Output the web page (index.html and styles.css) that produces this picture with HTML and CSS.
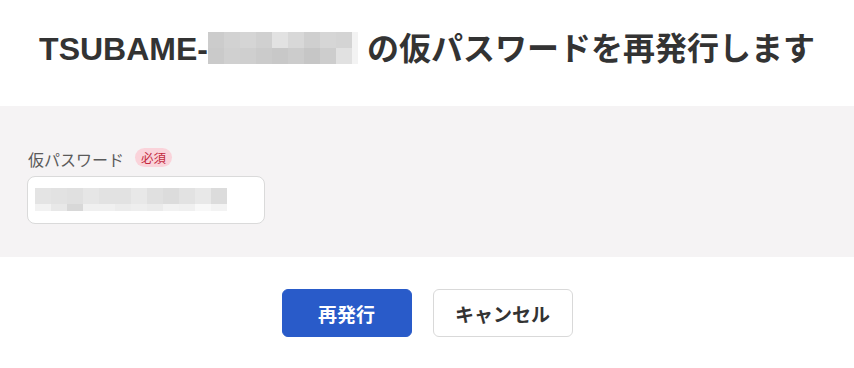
FILE: index.html
```html
<!DOCTYPE html>
<html lang="ja">
<head>
<meta charset="utf-8">
<title>仮パスワード再発行</title>
<link rel="stylesheet" href="styles.css">
</head>
<body>
<header class="head">
  <h1 class="title">TSUBAME-<span class="mosaic-wrap"><span class="mosaic-title"><i class="g1"></i><i class="g2"></i><i class="g3"></i><i class="g4"></i><i class="g5"></i><i class="g6"></i><i class="g7"></i><i class="g8"></i><i class="g9"></i><i class="g10"></i><i class="h1"></i><i class="h2"></i><i class="h3"></i><i class="h4"></i><i class="h5"></i><i class="h6"></i><i class="h7"></i><i class="h8"></i><i class="h9"></i><i class="g10"></i></span></span> の仮パスワードを再発行します</h1>
</header>
<section class="form-area">
  <div class="label-row">
    <span class="label">仮パスワード</span>
    <span class="badge">必須</span>
  </div>
  <div class="input">
    <div class="mosaic-input">
      <i class="a1"></i><i class="a2"></i><i class="a3"></i><i class="a4"></i><i class="a5"></i><i class="a6"></i><i class="a7"></i><i class="a8"></i><i class="a9"></i><i class="a10"></i><i class="a11"></i><i class="a12"></i>
      <i class="b1"></i><i class="b2"></i><i class="b3"></i><i class="b4"></i><i class="b5"></i><i class="b6"></i><i class="b7"></i><i class="b8"></i><i class="b9"></i><i class="b10"></i><i class="b11"></i><i class="b12"></i>
    </div>
  </div>
</section>
<div class="actions">
  <button class="btn btn-primary">再発行</button>
  <button class="btn btn-secondary">キャンセル</button>
</div>
</body>
</html>
```

FILE: styles.css
```css
html, body {
  margin: 0;
  padding: 0;
  background: #ffffff;
}
body {
  font-family: "Liberation Sans", "Noto Sans CJK JP", sans-serif;
  color: #333333;
}
.head {
  padding: 25px 0 33px;
}
.title {
  margin: 0;
  font-size: 32px;
  line-height: 48px;
  height: 48px;
  font-weight: 700;
  text-align: center;
  color: #333333;
  white-space: nowrap;
}
.mosaic-wrap {
  display: inline-block;
  width: 150px;
  height: 32px;
  overflow: hidden;
  vertical-align: -4px;
  line-height: 0;
}
.mosaic-title {
  display: grid;
  grid-template-columns: repeat(9, 16px) 6px;
  grid-template-rows: 16px 16px;
  width: 150px;
  height: 32px;
}
.mosaic-title i { display: block; }
.g1 { background: #cccccc; }
.g2 { background: #d2d2d2; }
.g3 { background: #d5d5d5; }
.g4 { background: #d0d0d0; }
.g5 { background: #e2e2e2; }
.g6 { background: #d8d8d8; }
.g7 { background: #cfcfcf; }
.g8 { background: #d6d6d6; }
.g9 { background: #d4d4d4; }
.g10 { background: #f3f3f3; }
.h1 { background: #cacaca; }
.h2 { background: #d0d0d0; }
.h3 { background: #cfcfcf; }
.h4 { background: #cbcbcb; }
.h5 { background: #c8c8c8; }
.h6 { background: #cccccc; }
.h7 { background: #c6c6c6; }
.h8 { background: #cdcdcd; }
.h9 { background: #e1e1e1; }

.form-area {
  background: #f5f3f4;
  padding: 41px 27px 33px;
}
.label-row {
  display: flex;
  align-items: center;
  height: 24px;
  padding-left: 1px;
  font-family: "Noto Sans CJK JP", sans-serif;
}
.label {
  font-size: 16px;
  line-height: 24px;
  color: #5a5a5a;
}
.badge {
  margin-left: 11px;
  height: 19px;
  line-height: 19px;
  padding: 0 6px;
  border-radius: 10px;
  background: #fad3da;
  color: #c32a3e;
  font-size: 12.5px;
  margin-top: -3px;
}
.input {
  margin-top: 5px;
  width: 238px;
  height: 48px;
  box-sizing: border-box;
  background: #ffffff;
  border: 1px solid #dadada;
  border-radius: 8px;
  padding: 11px 0 0 7px;
}
.mosaic-input {
  display: grid;
  grid-template-columns: repeat(12, 16px);
  grid-template-rows: 16px 7px;
}
.mosaic-input i { display: block; }
.a1 { background: #e4e4e4; }
.a2 { background: #e2e2e2; }
.a3 { background: #e0e0e0; }
.a4 { background: #e6e6e6; }
.a5 { background: #e2e2e2; }
.a6 { background: #e2e2e2; }
.a7 { background: #e8e8e8; }
.a8 { background: #e0e0e0; }
.a9 { background: #dcdcdc; }
.a10 { background: #e2e2e2; }
.a11 { background: #e8e8e8; }
.a12 { background: #dcdcdc; }
.b1 { background: #f2f2f2; }
.b2 { background: #e8e8e8; }
.b3 { background: #d8d8d8; }
.b4 { background: #f0f0f0; }
.b5 { background: #f0f0f0; }
.b6 { background: #ececec; }
.b7 { background: #eeeeee; }
.b8 { background: #ebebeb; }
.b9 { background: #f2f2f2; }
.b10 { background: #f0f0f0; }
.b11 { background: #f8f8f8; }
.b12 { background: #f3f3f3; }

.actions {
  display: flex;
  justify-content: center;
  gap: 21px;
  padding: 32px 0 31px;
}
.btn {
  height: 48px;
  box-sizing: border-box;
  border-radius: 6px;
  font-family: "Noto Sans CJK JP", sans-serif;
  font-size: 19px;
  font-weight: 700;
  line-height: 1;
  padding: 0;
  cursor: pointer;
}
.btn-primary {
  width: 130px;
  background: #295bc9;
  border: 1px solid #295bc9;
  color: #ffffff;
}
.btn-secondary {
  width: 140px;
  background: #ffffff;
  border: 1px solid #d9d9d9;
  color: #333333;
}
```
